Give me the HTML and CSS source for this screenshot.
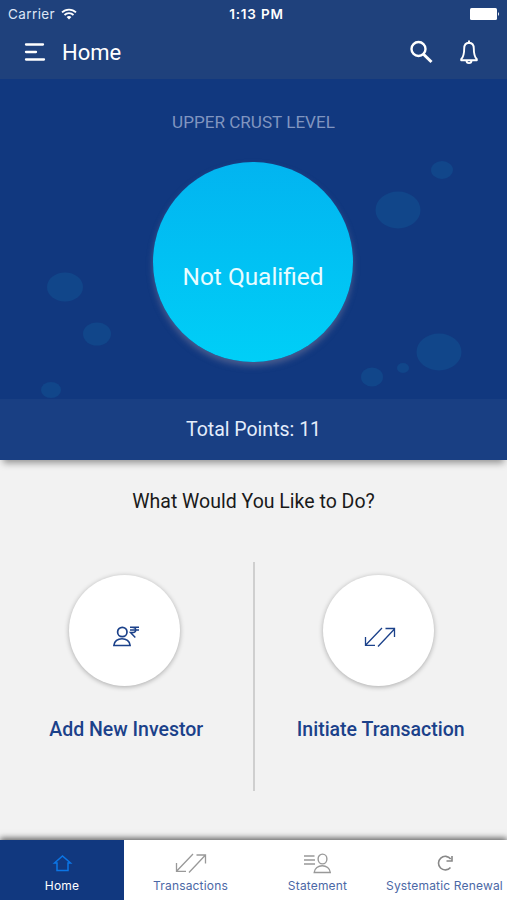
FILE: index.html
```html
<!DOCTYPE html>
<html lang="en">
<head>
    <meta charset="UTF-8">
    <meta name="viewport" content="width=device-width, initial-scale=1.0">
    <title>Home</title>
    <link rel="stylesheet" href="styles.css">
</head>
<body>
    <!-- Header -->
    <header class="header">
        <div class="status-bar">
            <div class="carrier">
                <span>Carrier</span>
                <svg class="wifi" width="16" height="12" viewBox="0 0 16 12" fill="none" stroke="#fff" stroke-width="1.8">
                    <path d="M1 4.4a10 10 0 0 1 14 0M3.5 7a6.4 6.4 0 0 1 9 0"/>
                    <path d="M5.6 9.1a3.4 3.4 0 0 1 4.8 0L8 11.6z" fill="#fff" stroke="none"/>
                </svg>
            </div>
            <div class="time">1:13 PM</div>
            <div class="battery">
                <svg width="30" height="12" viewBox="0 0 30 12" fill="#fff">
                    <rect width="27" height="12" rx="1.5"/>
                    <path d="M28 4q2 2 0 4z"/>
                </svg>
            </div>
        </div>
        <nav class="toolbar">
            <svg class="menu-icon" width="22" height="20" viewBox="0 0 22 20" stroke="#fff" stroke-width="2.3" stroke-linecap="round">
                <path d="M2 2.5h17M2 10h10M2 17.5h18"/>
            </svg>
            <h1>Home</h1>
            <svg class="search-icon" width="24" height="24" viewBox="0 0 24 24" fill="none" stroke="#fff" stroke-width="2.4">
                <circle cx="9.5" cy="9" r="7"/>
                <path d="M14.5 14.2L22.500 22" stroke-width="3"/>
            </svg>
            <svg width="20" height="26" viewBox="0 0 20 26" fill="none" stroke="#fff" stroke-width="1.9" stroke-linejoin="round">
                <path d="M10 3.800C6.800 4 5.200 6.200 5.200 9.500c0 5.300-.6 8.200-3 10.700v1h15.600v-1c-2.400-2.500-3-5.400-3-10.700 0-3.300-1.600-5.500-4.800-5.700z"/>
                <path d="M10 3.800V1.500M7.500 21.500a2.500 2.600 0 0 0 5 0"/>
            </svg>
        </nav>
    </header>

    <!-- Level -->
    <section class="level">
        <svg class="bubbles" width="507" height="320" viewBox="0 0 507 320">
            <ellipse cx="442" cy="91" rx="11" ry="9"/>
            <ellipse cx="398" cy="131" rx="22.5" ry="18.5"/>
            <ellipse cx="65" cy="208" rx="18" ry="14.5"/>
            <ellipse cx="97" cy="255" rx="14" ry="11.5"/>
            <ellipse cx="51" cy="311" rx="10" ry="8"/>
            <ellipse cx="439" cy="273" rx="22.5" ry="18.5"/>
            <ellipse cx="372" cy="298" rx="11" ry="9.5"/>
            <ellipse cx="403" cy="289" rx="6" ry="5"/>
        </svg>
        <h2>UPPER CRUST LEVEL</h2>
        <div class="level-circle">Not Qualified</div>
    </section>
    <div class="points">Total Points: 11</div>

    <!-- Actions -->
    <main class="actions">
        <h3>What Would You Like to Do?</h3>
        <div class="action-row">
            <div class="action">
                <div class="action-circle">
                    <svg class="investor-icon" width="28" height="24" viewBox="0 0 28 24" fill="none" stroke="#1b418a" stroke-width="1.7">
                        <circle cx="10.3" cy="7" r="4.7"/>
                        <path d="M1.9 20.5c.3-9 15.900-9 16.200 0z"/>
                        <path d="M18 2.300h9M18 4.900h9M20 2.300c5 0 5 5.300 0 5.300h-1.500l4.800 5" stroke-width="1.500"/>
                    </svg>
                </div>
                <p>Add New Investor</p>
            </div>
            <div class="divider"></div>
            <div class="action">
                <div class="action-circle">
                    <svg class="arrows-icon" width="32" height="20" viewBox="0 0 32 20" fill="none" stroke="#1b418a" stroke-width="1.3">
                        <path d="M18 1L1.500 18.300M1.500 10v8.300h9.500M14 19.500L30.500 2M21.500 1.500h9V10"/>
                    </svg>
                </div>
                <p>Initiate Transaction</p>
            </div>
        </div>
    </main>

    <!-- Bottom tabs -->
    <footer class="tabs">
        <div class="tab active">
            <svg width="32" height="22" viewBox="0 0 32 22" fill="none" stroke="#0b75e6" stroke-width="1.5">
                <path d="M8.500 11L16.500 4 24.500 11H22v7.500H11V11z"/>
            </svg>
            <span>Home</span>
        </div>
        <div class="tab">
            <svg width="32" height="22" viewBox="0 0 32 22" fill="none" stroke="#999" stroke-width="1.3">
                <path d="M18 2L1.500 19.300M1.500 11v8.300h9.500M14 20.500L30.500 3M21.500 3h9v8.500"/>
            </svg>
            <span>Transactions</span>
        </div>
        <div class="tab">
            <svg width="32" height="22" viewBox="0 0 32 22" fill="none" stroke="#999" stroke-width="1.4">
                <path d="M2 4h10.500M2 8h11M2 12h11"/>
                <ellipse cx="20.500" cy="7" rx="4.400" ry="4.900"/>
                <path d="M12.200 20.500c.5-9 15.600-9 16.100 0z"/>
            </svg>
            <span>Statement</span>
        </div>
        <div class="tab">
            <svg width="32" height="22" viewBox="0 0 32 22" fill="none" stroke="#888" stroke-width="1.6">
                <path d="M21.500 15.500A6.800 6.800 0 1 1 21.700 7"/>
                <path d="M23 4v5h-5.500"/>
            </svg>
            <span>Systematic Renewal</span>
        </div>
    </footer>
</body>
</html>
```

FILE: styles.css
```css
* {
    box-sizing: border-box;
}
body {
    margin: 0;
    height: 900px;
    display: flex;
    flex-direction: column;
    overflow: hidden;
    background-color: #f2f2f2;
    font-family: Roboto, sans-serif;
}
h1, h2, h3, p {
    margin: 0;
    font-weight: 400;
}
svg {
    display: block;
    flex: none;
}
.header {
    height: 79px;
    background-color: #1f417c;
    color: #fff;
}
.status-bar {
    display: grid;
    grid-template-columns: 1fr auto 1fr;
    align-items: center;
    height: 28px;
    padding: 0 7px 0 8px;
    font-family: Inter, sans-serif;
    font-size: 13px;
}
.carrier {
    display: flex;
    align-items: center;
    gap: 6px;
    color: #dde6f5;
    font-size: 13.5px;
    letter-spacing: 0.4px;
}
.time {
    font-weight: 600;
    font-size: 13.5px;
    letter-spacing: 0.8px;
    padding-left: 5px;
}
.battery {
    justify-self: end;
}
.toolbar {
    display: flex;
    align-items: center;
    height: 48px;
    padding: 0 28px 0 24px;
}
.toolbar h1 {
    flex: 1;
    margin-left: 16px;
    font-size: 22px;
}
.search-icon {
    margin-right: 26px;
}
.level {
    position: relative;
    height: 320px;
    display: flex;
    flex-direction: column;
    align-items: center;
    background-color: #11387f;
}
.bubbles {
    position: absolute;
    top: 0;
    left: 0;
    fill: #11468a;
}
.level h2 {
    margin-top: 32px;
    line-height: 22px;
    font-size: 17.1px;
    color: #8095c0;
}
.level-circle {
    position: relative;
    width: 200px;
    height: 200px;
    margin-top: 29px;
    margin-right: 1px;
    padding-top: 28px;
    display: flex;
    align-items: center;
    justify-content: center;
    border-radius: 50%;
    background: linear-gradient(#02b4f0, #00cff7);
    box-shadow: 0 4px 6px rgba(130, 130, 160, 0.5);
    color: #e8fcff;
    font-size: 24.4px;
}
.points {
    height: 61px;
    line-height: 62px;
    text-align: center;
    background-color: #193f83;
    box-shadow: 0 6px 7px -3px rgba(0, 0, 0, 0.4);
    color: #e4edfb;
    font-size: 19.5px;
}
.actions {
    flex: 1;
}
.actions h3 {
    margin-top: 30px;
    line-height: 24px;
    text-align: center;
    font-size: 19.5px;
    color: #1a1a1a;
}
.action-row {
    display: flex;
    margin-top: 48px;
}
.action {
    flex: 1;
    display: flex;
    flex-direction: column;
    align-items: center;
    padding-top: 13px;
}
.action-circle {
    width: 111px;
    height: 111px;
    margin-right: 4px;
    display: flex;
    align-items: center;
    justify-content: center;
    border-radius: 50%;
    background-color: #fff;
    box-shadow: 0 1px 5px rgba(0, 0, 0, 0.3);
}
.investor-icon {
    margin: 12px 0 0 3px;
}
.arrows-icon {
    margin: 12px 0 0 3px;
}
.action p {
    margin-top: 32px;
    line-height: 24px;
    font-size: 19.5px;
    font-weight: 500;
    color: #1b418a;
}
.divider {
    width: 2px;
    height: 229px;
    background-color: #cfcfcf;
}
.tabs {
    height: 60px;
    display: flex;
    background-color: #fff;
    box-shadow: 0 -2px 6px rgba(0, 0, 0, 0.6);
}
.tab {
    flex: none;
    width: 127px;
    display: flex;
    flex-direction: column;
    align-items: center;
    padding-top: 12px;
    font-family: Inter, sans-serif;
    font-size: 12px;
    line-height: 23px;
    letter-spacing: 0.17px;
    white-space: nowrap;
    color: #4b68a6;
}
.tab.active {
    width: 124px;
    margin-right: 3px;
    background-color: #11387f;
    color: #fff;
}
```
